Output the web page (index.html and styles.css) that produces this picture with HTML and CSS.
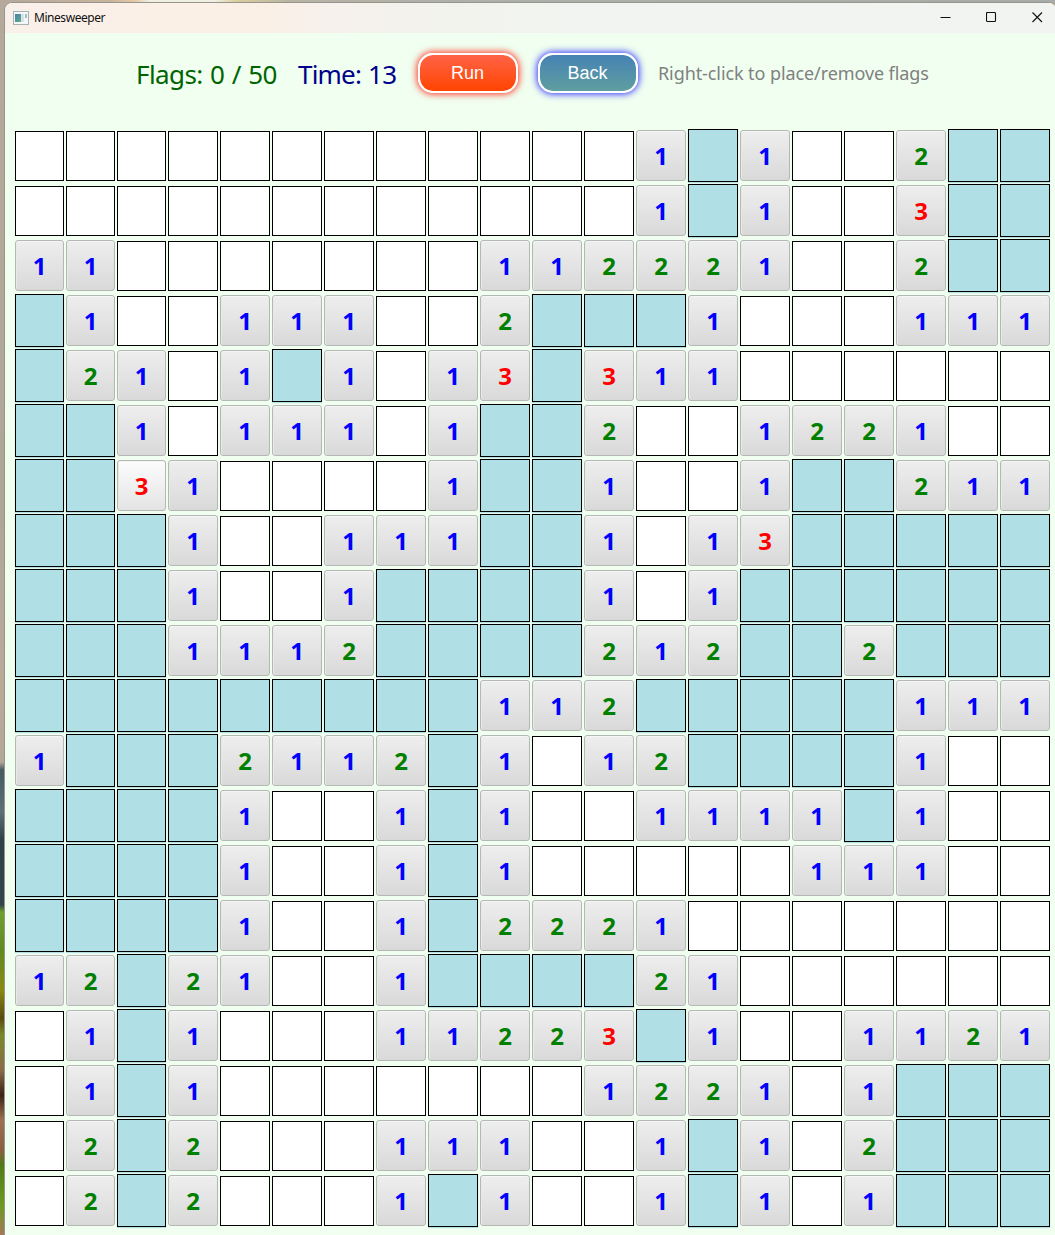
FILE: index.html
```html
<!DOCTYPE html>
<html lang="en">
<head>
<meta charset="utf-8">
<title>Minesweeper</title>
<link rel="stylesheet" href="styles.css">
</head>
<body>
<div class="desktop">
  <main class="window">
    <header class="titlebar">
      <svg class="app-icon" width="16" height="14" viewBox="0 0 16 14">
        <defs>
          <linearGradient id="pane" x1="0" y1="0" x2="1" y2="1">
            <stop offset="0" stop-color="#4a7fb0"/>
            <stop offset="1" stop-color="#5cae86"/>
          </linearGradient>
        </defs>
        <rect x="0.5" y="0.5" width="15" height="13" fill="#f4f6f8" stroke="#a9b1b8"/>
        <rect x="2" y="3" width="6" height="8" fill="url(#pane)"/>
        <rect x="8" y="3" width="3" height="8" fill="#dde2e8"/>
        <rect x="12" y="3" width="2" height="4" fill="#9cc3c4"/>
      </svg>
      <h1 class="title">Minesweeper</h1>
      <div class="controls">
        <svg width="11" height="11" viewBox="0 0 11 11"><path d="M0.5 5.5H10.5"/></svg>
        <svg width="11" height="11" viewBox="0 0 11 11"><rect x="0.5" y="0.5" width="9" height="9" rx="1"/></svg>
        <svg width="11" height="11" viewBox="0 0 11 11"><path d="M0.5 0.5L10 10M10 0.5L0.5 10"/></svg>
      </div>
    </header>
    <section class="toolbar">
      <span class="stat flags">Flags: 0 / 50</span>
      <span class="stat time">Time: 13</span>
      <button class="btn run">Run</button>
      <button class="btn back">Back</button>
      <span class="hint">Right-click to place/remove flags</span>
    </section>
    <section class="board" id="board"></section>
  </main>
</div>
<script src="board.js"></script>
</body>
</html>
```
FILE: styles.css
```css
* { box-sizing: border-box; }
body { margin: 0; font-family: "Noto Sans", sans-serif; }
.desktop {
  width: 1055px;
  height: 1235px;
  padding: 2px 0 0 4px;
  overflow: hidden;
  background:
    linear-gradient(90deg, #b5a99b 0, #c8b49c 110px, #e6c9a2 135px, #efefe2 150px, #efefe2 215px, #dccf9e 235px, #b8b4a2 290px, #aeb0aa 420px, #a8aca8 100%) 0 0 / 100% 2px no-repeat,
    linear-gradient(180deg, #b5a99b 0, #b0a696 500px, #b9aa9a 690px, #b3a797 762px, #465a62 770px, #5d7078 812px, #2f4048 840px, #33454a 905px, #6fa02e 912px, #5f8a20 950px, #8a8a10 990px, #5c4a10 1018px, #7a8a28 1035px, #8a6a48 1070px, #3a2418 1095px, #9a7050 1120px, #8a5f40 1150px, #4f7a18 1165px, #6b9a20 1205px, #a57858 1235px);
}
.window {
  width: 1053px;
  height: 1235px;
  border: 1px solid #98958f;
  border-radius: 8px 8px 0 0;
  background: #f0fff0;
  overflow: hidden;
}
.titlebar {
  display: flex;
  align-items: center;
  height: 30px;
  padding: 0 0 0 8px;
  background: linear-gradient(90deg, #faf0ea 0, #faf0e6 150px, #faf0e6 265px, #f6f1ec 330px, #f3f2ec 410px, #f1f4f0 560px);
}
.app-icon { margin-top: -1px; }
.title {
  margin: 0 0 1px 5px;
  font-size: 12px;
  font-weight: 400;
  letter-spacing: -0.45px;
  color: #111;
}
.controls { display: flex; gap: 35px; margin: 0 13px 1px auto; }
.controls svg { fill: none; stroke: #111; stroke-width: 1.1; }
.toolbar {
  display: flex;
  align-items: center;
  height: 80px;
  padding-left: 131px;
}
.stat { padding-top: 1px; font-size: 26px; line-height: 34px; white-space: nowrap; }
.flags { width: 162px; letter-spacing: -0.6px; word-spacing: 1.3px; color: #006400; }
.time { width: 120px; letter-spacing: -0.8px; word-spacing: 1px; color: #00008b; }
.btn {
  width: 100px;
  height: 40px;
  margin-right: 20px;
  padding: 1px 1px 0 0;
  border: 2px solid #fff;
  border-radius: 15px;
  color: #fff;
  font: 18px "Liberation Sans", sans-serif;
}
.run { background: linear-gradient(#ff6347, #ff4500) padding-box; box-shadow: 0 0 7px 1px #ff3020; }
.back { background: linear-gradient(#4682b4, #5f9ea0) padding-box; box-shadow: 0 0 7px 1px #3030ff; }
.hint { font-size: 18px; letter-spacing: -0.09px; color: #808080; white-space: nowrap; }
.board {
  display: grid;
  grid-template-columns: repeat(3, 49px) repeat(17, 50px);
  grid-auto-rows: 53px;
  gap: 2px;
  padding: 16px 0 0 10px;
}
.cell { display: flex; align-items: center; justify-content: center; }
.covered { background: #b0e0e6; border: 1px solid #000; box-shadow: 0 1px 1px #b5dde2; }
.empty { height: 50px; margin-top: 2px; background: #fff; border: 1px solid #000; }
.num {
  height: 51px;
  margin-top: 1px;
  padding-bottom: 1px;
  border: 1px solid #b4b8b4;
  border-radius: 3px;
  background: linear-gradient(#eee, #d9d9d9);
  box-shadow: inset 0 1px #f6f6f6, inset 1px 0 #e9e9e9;
  font-size: 24px;
  font-weight: 700;
}
.hovered { background: linear-gradient(#fcfcfc, #e4e4e4); }
.n1 { color: #0000ff; }
.n2 { color: #008000; }
.n3 { color: #ff0000; }
```
FILE: board.js
```js
// "#" is a covered cell, "." an opened empty cell, a digit its mine count.
const rows = [
  "............1#1..2##",
  "............1#1..3##",
  "11.......112221..2##",
  "#1..111..2###1...111",
  "#21.1#1.13#311......",
  "##1.111.1##2..1221..",
  "##31....1##1..1##211",
  "###1..111##1.13#####",
  "###1..1####1.1######",
  "###1112####212##2###",
  "#########112#####111",
  "1###2112#1.12####1..",
  "####1..1#1..1111#1..",
  "####1..1#1.....111..",
  "####1..1#2221.......",
  "12#21..1####21......",
  ".1#1...11223#1..1121",
  ".1#1.......1221.1###",
  ".2#2...111..1#1.2###",
  ".2#2...1#1..1#1.1###"
];
const hovered = { row: 6, col: 2 };
const board = document.getElementById("board");

rows.forEach((row, r) => {
  [...row].forEach((value, c) => {
    const cell = document.createElement("div");
    if (value === "#") {
      cell.className = "cell covered";
    } else if (value === ".") {
      cell.className = "cell empty";
    } else {
      cell.className = "cell num n" + value;
      cell.textContent = value;
      if (r === hovered.row && c === hovered.col) cell.classList.add("hovered");
    }
    board.appendChild(cell);
  });
});
```
